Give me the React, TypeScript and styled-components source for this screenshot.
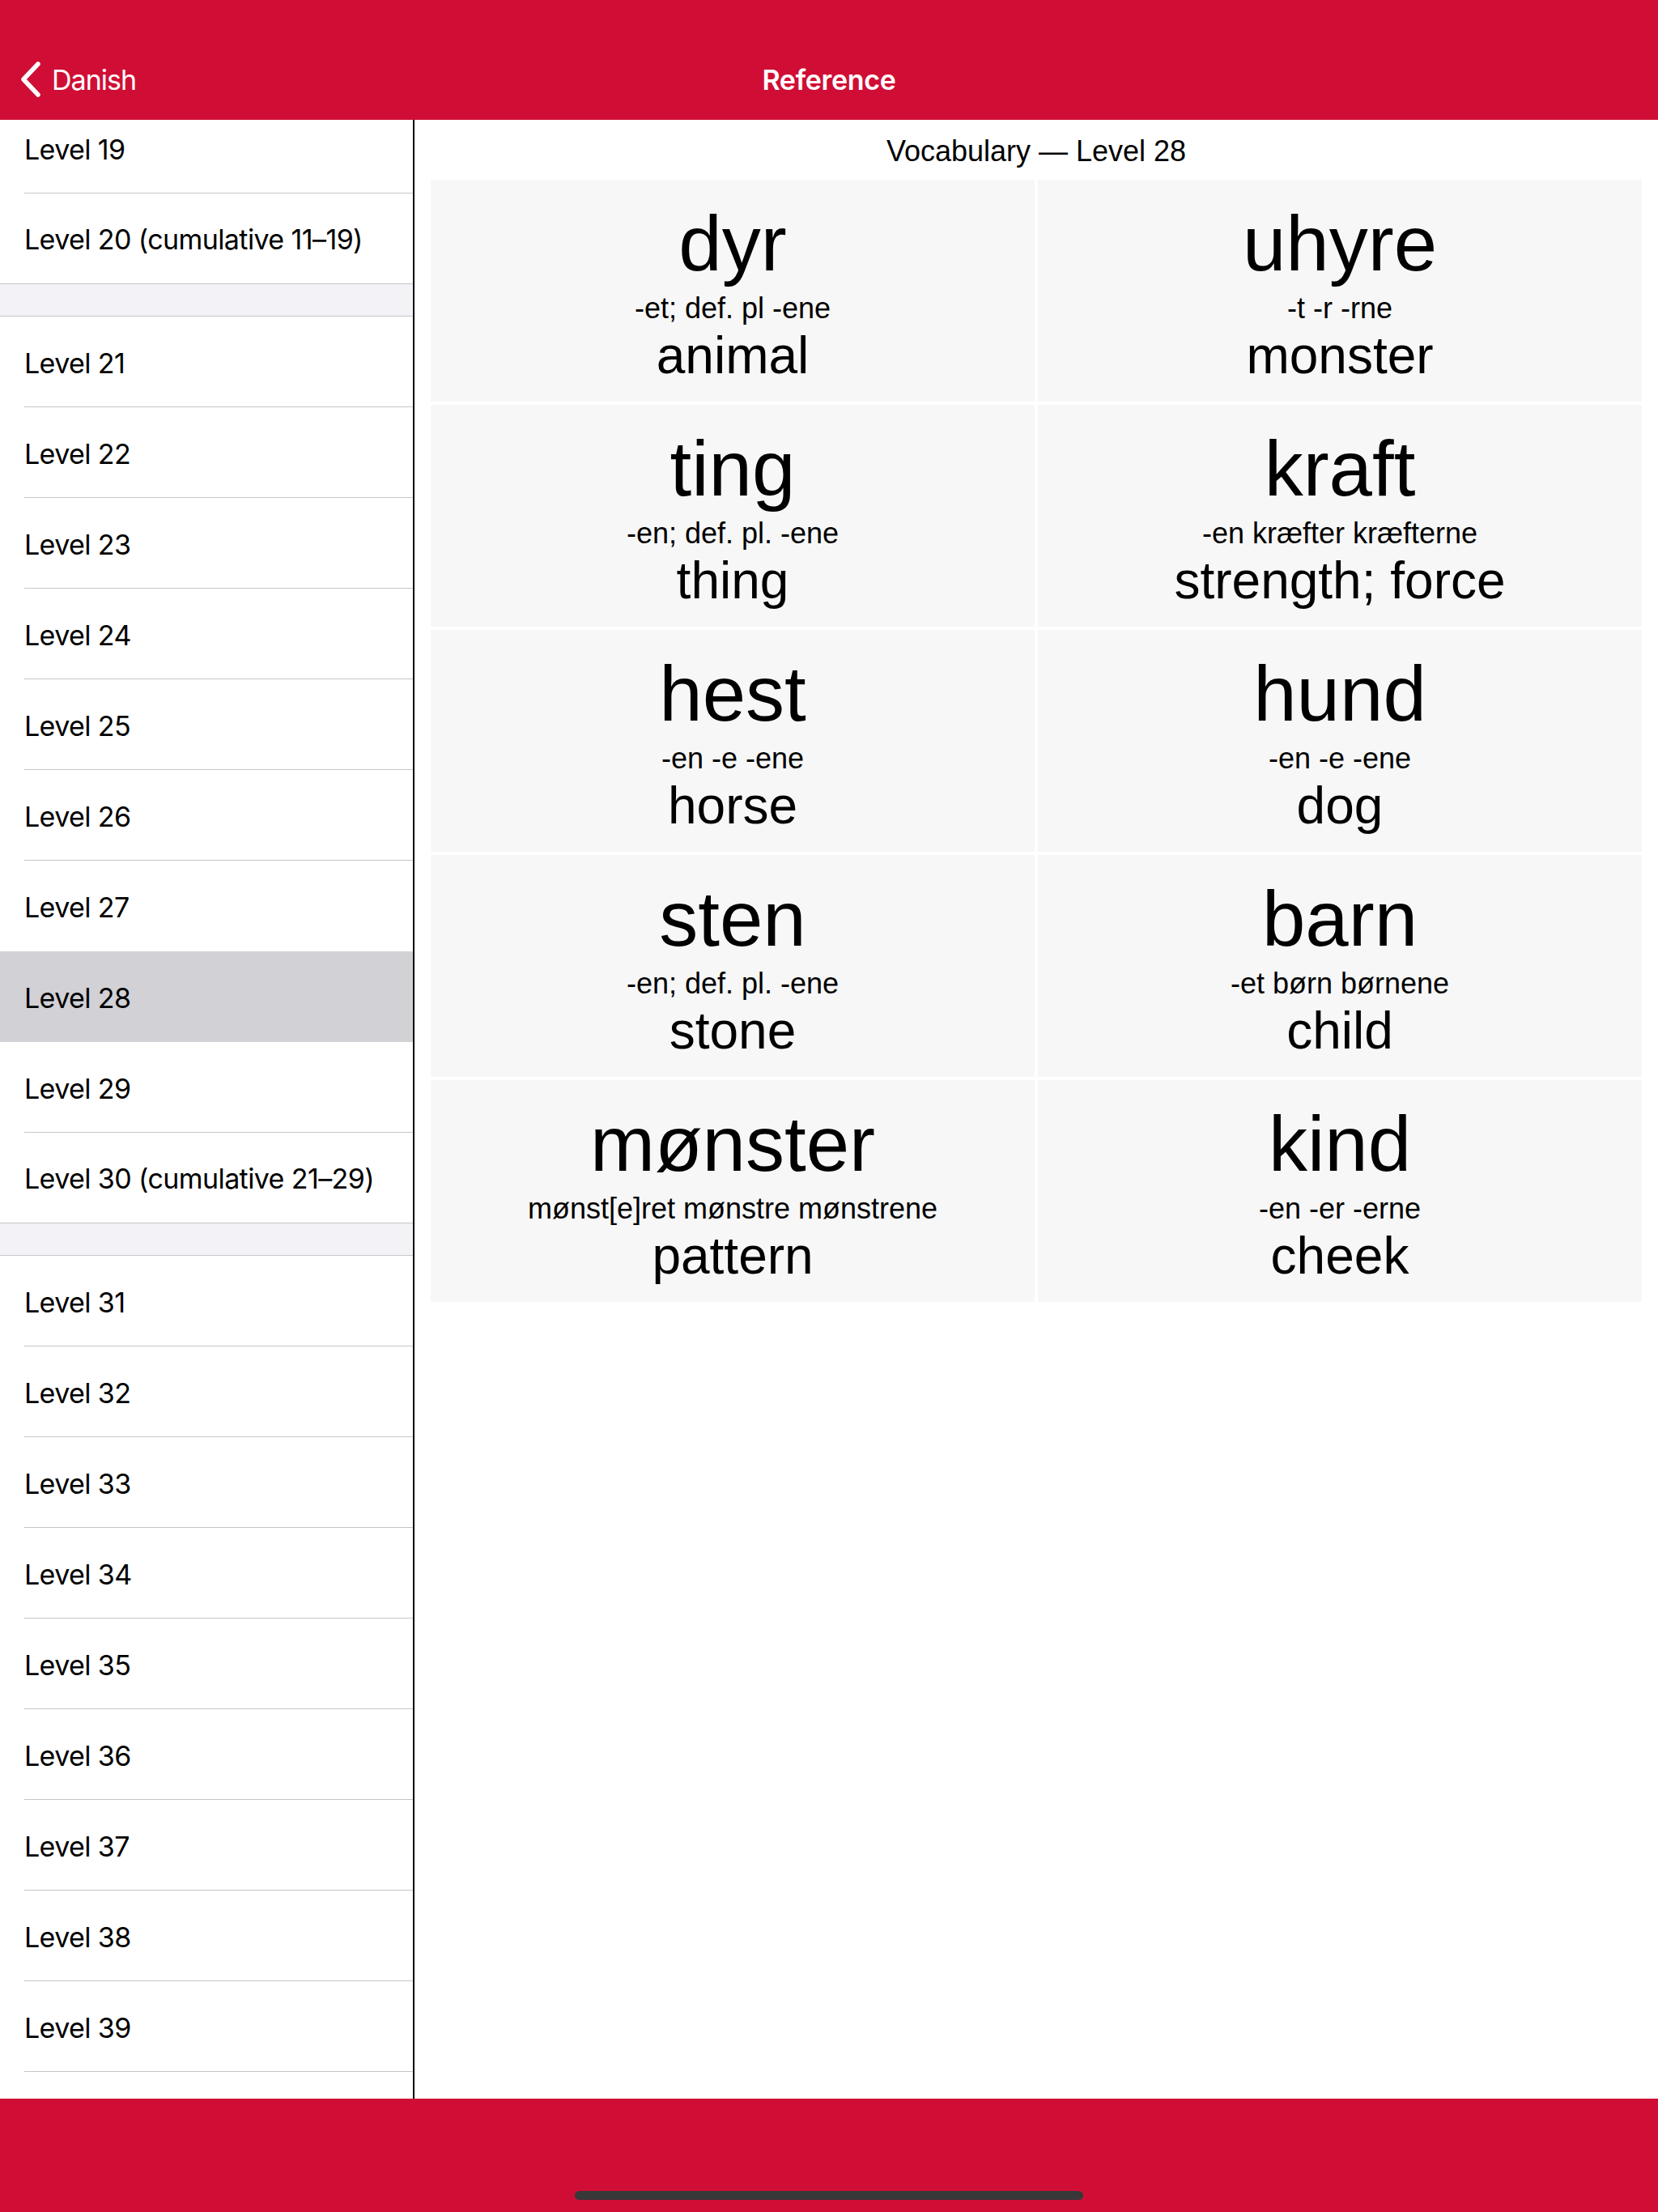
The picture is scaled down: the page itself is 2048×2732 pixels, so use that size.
import React from 'react';
import styled, { createGlobalStyle } from 'styled-components';

const GlobalStyle = createGlobalStyle`
  html, body {
    margin: 0;
    padding: 0;
    background: #ffffff;
  }
  * {
    box-sizing: border-box;
  }
`;

const RED = '#d00e35';
const UI_FONT = "Inter, 'Noto Sans', sans-serif";
const CONTENT_FONT = "'Liberation Sans', Arial, sans-serif";

const Screen = styled.div`
  width: 2048px;
  height: 2732px;
  display: flex;
  flex-direction: column;
  overflow: hidden;
  font-family: ${UI_FONT};
  color: #000;
`;

const NavBar = styled.header`
  height: 148px;
  flex-shrink: 0;
  background: ${RED};
  padding-top: 48px;
  display: grid;
  grid-template-columns: 1fr auto 1fr;
  align-items: center;
`;

const BackButton = styled.button`
  display: flex;
  align-items: center;
  gap: 13px;
  padding: 0 0 0 25px;
  border: none;
  background: transparent;
  color: #fff;
  font-family: ${UI_FONT};
  font-size: 34px;
  letter-spacing: -1px;
  cursor: pointer;
  justify-self: start;
`;

const NavTitle = styled.h1`
  margin: 0;
  color: #fff;
  font-size: 34px;
  font-weight: 600;
  letter-spacing: -0.3px;
`;

const Body = styled.div`
  flex: 1;
  display: flex;
  min-height: 0;
`;

const Sidebar = styled.nav`
  width: 512px;
  flex-shrink: 0;
  border-right: 2px solid #000;
  overflow: hidden;
`;

const SidebarScroll = styled.div`
  margin-top: -21px;
`;

const SectionGap = styled.div`
  height: 40px;
  background: #f2f2f7;
  border-bottom: 1px solid #c6c6c8;
`;

const Row = styled.div<{ $selected?: boolean; $last?: boolean }>`
  height: 112px;
  padding-left: 30px;
  background: ${p => (p.$selected ? '#d1d1d6' : '#fff')};
  border-bottom: ${p => (p.$last ? '1px solid #c6c6c8' : 'none')};
  display: flex;
`;

const RowLabel = styled.div<{ $line: boolean }>`
  flex: 1;
  display: flex;
  align-items: center;
  padding-top: 3px;
  font-size: 34px;
  letter-spacing: -0.6px;
  border-bottom: 1px solid ${p => (p.$line ? '#c6c6c8' : 'transparent')};
`;

const Detail = styled.main`
  flex: 1;
  display: flex;
  flex-direction: column;
`;

const DetailTitle = styled.div`
  height: 74px;
  padding-top: 3px;
  display: flex;
  align-items: center;
  justify-content: center;
  font-family: ${CONTENT_FONT};
  font-size: 36px;
`;

const CardGrid = styled.div`
  display: grid;
  grid-template-columns: 1fr 1fr;
  grid-auto-rows: 274px;
  gap: 4px;
  padding: 0 20px;
`;

const Card = styled.div`
  background: #f7f7f7;
  display: flex;
  flex-direction: column;
  align-items: center;
  justify-content: center;
  font-family: ${CONTENT_FONT};
  text-align: center;
`;

const Word = styled.div`
  font-size: 96px;
  line-height: 112px;
`;

const Inflection = styled.div`
  font-size: 36px;
  line-height: 47px;
`;

const Meaning = styled.div`
  font-size: 64px;
  line-height: 70px;
`;

const Toolbar = styled.footer`
  height: 140px;
  flex-shrink: 0;
  background: ${RED};
  display: flex;
  flex-direction: column;
  justify-content: flex-end;
  align-items: center;
  padding-bottom: 15px;
`;

const HomeIndicator = styled.div`
  width: 628px;
  height: 11px;
  border-radius: 6px;
  background: #383838;
`;

type Section = { levels: string[] };

// the last row sits under the toolbar, only its top edge shows
const sections: Section[] = [
  { levels: ['Level 19', 'Level 20 (cumulative 11–19)'] },
  {
    levels: [
      'Level 21', 'Level 22', 'Level 23', 'Level 24', 'Level 25',
      'Level 26', 'Level 27', 'Level 28', 'Level 29', 'Level 30 (cumulative 21–29)',
    ],
  },
  {
    levels: [
      'Level 31', 'Level 32', 'Level 33', 'Level 34', 'Level 35',
      'Level 36', 'Level 37', 'Level 38', 'Level 39', '',
    ],
  },
];

const selectedLevel = 'Level 28';

const words = [
  { word: 'dyr', forms: '-et; def. pl -ene', meaning: 'animal' },
  { word: 'uhyre', forms: '-t -r -rne', meaning: 'monster' },
  { word: 'ting', forms: '-en; def. pl. -ene', meaning: 'thing' },
  { word: 'kraft', forms: '-en kræfter kræfterne', meaning: 'strength; force' },
  { word: 'hest', forms: '-en -e -ene', meaning: 'horse' },
  { word: 'hund', forms: '-en -e -ene', meaning: 'dog' },
  { word: 'sten', forms: '-en; def. pl. -ene', meaning: 'stone' },
  { word: 'barn', forms: '-et børn børnene', meaning: 'child' },
  { word: 'mønster', forms: 'mønst[e]ret mønstre mønstrene', meaning: 'pattern' },
  { word: 'kind', forms: '-en -er -erne', meaning: 'cheek' },
];

const BackChevron = () => (
  <svg width="26" height="44" viewBox="0 0 26 44" fill="none">
    <polyline
      points="22,3 4,22 22,41"
      stroke="#fff"
      strokeWidth="5.5"
      strokeLinecap="round"
      strokeLinejoin="round"
    />
  </svg>
);

export default function App() {
  return (
    <>
      <GlobalStyle />
      <Screen>
        <NavBar>
          <BackButton>
            <BackChevron />
            Danish
          </BackButton>
          <NavTitle>Reference</NavTitle>
        </NavBar>

        <Body>
          <Sidebar>
            <SidebarScroll>
              {sections.map((section, si) => (
                <React.Fragment key={si}>
                  {si > 0 && <SectionGap />}
                  {section.levels.map((level, i) => {
                    const last = i === section.levels.length - 1 && si < sections.length - 1;
                    const selected = level === selectedLevel;
                    const nextSelected = section.levels[i + 1] === selectedLevel;
                    return (
                      <Row key={`${si}-${i}`} $selected={selected} $last={last}>
                        <RowLabel $line={!last && !selected && !nextSelected}>{level}</RowLabel>
                      </Row>
                    );
                  })}
                </React.Fragment>
              ))}
            </SidebarScroll>
          </Sidebar>

          <Detail>
            <DetailTitle>Vocabulary — Level 28</DetailTitle>
            <CardGrid>
              {words.map(w => (
                <Card key={w.word}>
                  <Word>{w.word}</Word>
                  <Inflection>{w.forms}</Inflection>
                  <Meaning>{w.meaning}</Meaning>
                </Card>
              ))}
            </CardGrid>
          </Detail>
        </Body>

        <Toolbar>
          <HomeIndicator />
        </Toolbar>
      </Screen>
    </>
  );
}
